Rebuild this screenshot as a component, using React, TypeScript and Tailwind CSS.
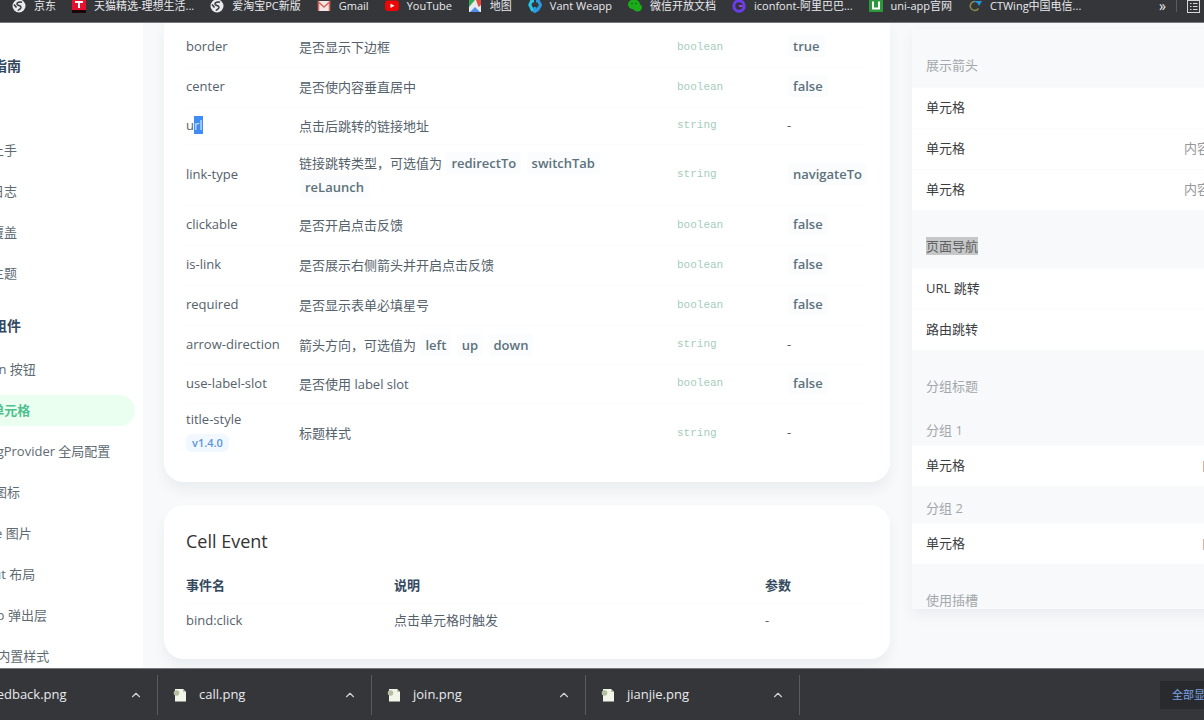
import type { ReactNode } from "react";
import { ChevronUp } from "lucide-react";

const GlobeIcon = () => (
  <svg viewBox="0 0 14 14" className="size-3.5 shrink-0">
    <circle cx="7" cy="7" r="6.5" fill="#e8eaed" />
    <path d="M10 3.2C8 2.6 4.600 3.300 5 5.200c.4 1.600 4.200 1 4 3.200-.2 1.600-2 1.800-3 3.200M2 5.500l2.500 3" fill="none" stroke="#35363a" strokeWidth="1.500" />
  </svg>
);

const bookmarks: { label: string; icon: ReactNode }[] = [
  { label: "京东", icon: <GlobeIcon /> },
  {
    label: "天猫精选-理想生活...",
    icon: (
      <svg viewBox="0 0 14 14" className="size-3.5 shrink-0">
        <rect width="14" height="11" fill="#e8112d" />
        <rect y="11" width="14" height="3" fill="#1a0508" />
        <path d="M3 3h8M7 3v6" stroke="#fff" strokeWidth="2" />
      </svg>
    ),
  },
  { label: "爱淘宝PC新版", icon: <GlobeIcon /> },
  {
    label: "Gmail",
    icon: (
      <svg viewBox="0 0 14 14" className="size-3.5 shrink-0">
        <rect x="1" y="2" width="12" height="10" rx="1" fill="#f3e6e4" />
        <path d="M1.500 12V3L7 8l5.500-5v9" fill="none" stroke="#d9685e" strokeWidth="1.500" />
      </svg>
    ),
  },
  {
    label: "YouTube",
    icon: (
      <svg viewBox="0 0 14 14" className="size-3.5 shrink-0">
        <rect y="1.500" width="14" height="10.500" rx="3" fill="#f00505" />
        <path d="M5.500 4.500v4.500L9.500 6.800z" fill="#fff" />
      </svg>
    ),
  },
  {
    label: "地图",
    icon: (
      <svg viewBox="0 0 14 14" className="size-3.5 shrink-0">
        <rect x="1" y="1" width="12" height="12" fill="#e8eaed" />
        <path d="M1 1h6L1 8z" fill="#34a853" />
        <path d="M2 13l5-5 5 5z" fill="#4f8df0" />
        <path d="M8 1h5v5l-2.500 2z" fill="#e04a3f" />
      </svg>
    ),
  },
  {
    label: "Vant Weapp",
    icon: (
      <svg viewBox="0 0 14 14" className="size-3.5 shrink-0" fill="none" strokeWidth="3">
        <path d="M6 2H3.500L1.800 6l2.500 5H6" stroke="#29c4e8" />
        <path d="M8 2h2.500l2 4-2.500 4.500L7 12.500V8" stroke="#2a9be0" />
      </svg>
    ),
  },
  {
    label: "微信开放文档",
    icon: (
      <svg viewBox="0 0 14 14" className="size-3.5 shrink-0" fill="#1aad19">
        <ellipse cx="6" cy="5.500" rx="6" ry="5" />
        <ellipse cx="9.500" cy="8.500" rx="4.500" ry="4" />
        <circle cx="4" cy="4.500" r="0.800" fill="#0b5e0b" />
        <circle cx="8" cy="4.500" r="0.800" fill="#0b5e0b" />
      </svg>
    ),
  },
  {
    label: "iconfont-阿里巴巴...",
    icon: (
      <svg viewBox="0 0 14 14" className="size-3.5 shrink-0" fill="none">
        <circle cx="7" cy="7" r="5.200" stroke="#6a3df0" strokeWidth="3" />
        <path d="M7 7h3.500" stroke="#a93de8" strokeWidth="2" />
      </svg>
    ),
  },
  {
    label: "uni-app官网",
    icon: (
      <svg viewBox="0 0 14 14" className="size-3.5 shrink-0">
        <rect width="14" height="13" fill="#2b9939" />
        <path d="M4 2.500v7h6v-7" fill="none" stroke="#fff" strokeWidth="2" />
      </svg>
    ),
  },
  {
    label: "CTWing中国电信...",
    icon: (
      <svg viewBox="0 0 14 14" className="size-3.5 shrink-0" fill="none">
        <path d="M7 2.500a4.500 4.500 0 1 0 3.500 7" stroke="#8a8a4a" strokeWidth="1.500" />
        <path d="M5 2h9l-3 5-1.500-3z" fill="#1d9be0" />
      </svg>
    ),
  },
];

const nav = [
  { title: "开发指南", items: ["介绍", "快速上手", "更新日志", "样式覆盖", "定制主题"] },
  {
    title: "基础组件",
    items: [
      "Button 按钮",
      "Cell 单元格",
      "ConfigProvider 全局配置",
      "Icon 图标",
      "Image 图片",
      "Layout 布局",
      "Popup 弹出层",
      "Style 内置样式",
    ],
  },
];

const Code = ({ children }: { children: ReactNode }) => (
  <code className="mx-px rounded bg-[#fafcfe] px-[5px] py-0.5 font-['Open_Sans','Noto_Sans_CJK_SC',sans-serif] text-[13px] font-semibold text-[#5d727b]">
    {children}
  </code>
);

type Prop = { name: ReactNode; desc: ReactNode; type: string; value: string; height?: string };

const props: Prop[] = [
  { name: "border", desc: "是否显示下边框", type: "boolean", value: "true" },
  { name: "center", desc: "是否使内容垂直居中", type: "boolean", value: "false" },
  {
    name: (
      <>
        u<span className="bg-[#3f8cf3] text-[#d5e7ff]">rl</span>
      </>
    ),
    desc: "点击后跳转的链接地址",
    type: "string",
    value: "-",
    height: "h-[37px]",
  },
  {
    name: "link-type",
    desc: (
      <>
        链接跳转类型，可选值为 <Code>redirectTo</Code> <Code>switchTab</Code> <Code>reLaunch</Code>
      </>
    ),
    type: "string",
    value: "navigateTo",
    height: "h-[61px]",
  },
  { name: "clickable", desc: "是否开启点击反馈", type: "boolean", value: "false" },
  { name: "is-link", desc: "是否展示右侧箭头并开启点击反馈", type: "boolean", value: "false" },
  { name: "required", desc: "是否显示表单必填星号", type: "boolean", value: "false" },
  {
    name: "arrow-direction",
    desc: (
      <>
        箭头方向，可选值为 <Code>left</Code> <Code>up</Code> <Code>down</Code>
      </>
    ),
    type: "string",
    value: "-",
    height: "h-[39px]",
  },
  { name: "use-label-slot", desc: "是否使用 label slot", type: "boolean", value: "false", height: "h-[39px]" },
  {
    name: (
      <>
        title-style
        <span className="my-1 block w-fit rounded-md bg-[#f2f8ff] px-1.5 text-[11px] leading-[18px] font-semibold text-[#5a96dc]">
          v1.4.0
        </span>
      </>
    ),
    desc: "标题样式",
    type: "string",
    value: "-",
    height: "h-[59px]",
  },
];

const downloads = ["feedback.png", "call.png", "join.png", "jianjie.png"];

function BookmarkBar() {
  return (
    <header className="h-[23px] shrink-0 overflow-hidden border-b border-[#77787a] bg-[#35363a] text-[11px] text-[#e8eaed]">
      <div className="flex h-3 items-center pl-3">
        <div className="flex flex-1 items-center gap-4">
          {bookmarks.map((b) => (
            <a key={b.label} href="#" className="flex items-center gap-2 whitespace-nowrap">
              {b.icon}
              {b.label}
            </a>
          ))}
        </div>
        <button className="pr-2.5 text-sm" aria-label="更多书签">»</button>
        <div className="h-3 w-px bg-[#5a5b5e]" />
        <svg viewBox="0 0 13 13" className="mr-1 ml-2.5 size-[13px]" fill="none" stroke="#d5d6d8">
          <rect x="0.500" y="0.500" width="12" height="12" />
          <path d="M3 3.500h1.500M3 6.500h1.500M3 9.500h1.500M6 3.500h4.500M6 6.500h4.500M6 9.500h4.500" />
        </svg>
      </div>
    </header>
  );
}

function Sidebar() {
  return (
    <nav className="w-[143px] shrink-0 overflow-hidden bg-white pt-[11px]">
      {/* scrolled sideways, the start of each label is cut off */}
      <div className="mr-2 -ml-[53px] whitespace-nowrap">
        {nav.map((group) => (
          <section key={group.title}>
            <h2 className="h-[55px] pt-5 pl-[18px] text-sm leading-6 font-bold text-[#34495e]">{group.title}</h2>
            <ul>
              {group.items.map((item) => (
                <li key={item} className="py-[5px]">
                  <a
                    href="#"
                    className={
                      item === "Cell 单元格"
                        ? "block rounded-full bg-[#ebfff0] pl-[18px] leading-[31px] font-semibold text-[#4fc08d]"
                        : "block pl-[18px] leading-[31px] text-[#5f6b72]"
                    }
                  >
                    {item}
                  </a>
                </li>
              ))}
            </ul>
          </section>
        ))}
      </div>
    </nav>
  );
}

function Docs() {
  return (
    <main className="flex min-w-0 flex-1 flex-col gap-[23px] pr-[22px] pl-[21px] text-[#55616b]">
      <section className="rounded-b-[20px] bg-white px-[22px] pt-1 pb-5 shadow-[0_8px_12px_#ebedf0]">
        <table className="w-full table-fixed text-left">
          <colgroup>
            <col className="w-[113px]" />
            <col />
            <col className="w-[110px]" />
            <col className="w-[81px]" />
          </colgroup>
          <tbody>
            {props.map((p, i) => (
              <tr key={i} className="border-b border-[#fcfcfd] last:border-b-0">
                <td className={p.height ?? "h-10"}>{p.name}</td>
                <td className="pr-5 leading-6">{p.desc}</td>
                <td className="font-['Liberation_Mono',monospace] text-[11px] text-[#a5cdbd]">{p.type}</td>
                <td>{p.value === "-" ? "-" : <Code>{p.value}</Code>}</td>
              </tr>
            ))}
          </tbody>
        </table>
      </section>

      <section className="rounded-[20px] bg-white px-[22px] pt-[22px] pb-[21px] shadow-[0_8px_12px_#ebedf0]">
        <h3 className="mb-3.5 text-lg leading-7 font-medium text-[#333]">Cell Event</h3>
        <table className="w-full table-fixed text-left">
          <colgroup>
            <col className="w-[208px]" />
            <col />
            <col className="w-[103px]" />
          </colgroup>
          <thead>
            <tr className="h-[34px] text-[#34495e]">
              <th>事件名</th>
              <th>说明</th>
              <th>参数</th>
            </tr>
          </thead>
          <tbody>
            <tr className="h-[35px] border-t border-[#fcfcfd]">
              <td>bind:click</td>
              <td>点击单元格时触发</td>
              <td>-</td>
            </tr>
          </tbody>
        </table>
      </section>
    </main>
  );
}

const Title = ({ children }: { children: ReactNode }) => (
  <h4 className="px-3.5 pt-[27px] pb-[13px] leading-[18px] text-[#a3a8ab] last:pb-0">{children}</h4>
);

const GroupTitle = ({ children }: { children: ReactNode }) => (
  <h5 className="px-3.5 pt-[13px] pb-1.5 leading-[18px] text-[#a3a8ab]">{children}</h5>
);

const Cell = ({ title, value, arrow }: { title: string; value?: string; arrow?: boolean }) => (
  <div className="flex h-[41px] items-center justify-between border-t border-[#fafbfc] bg-white px-3.5 text-[#3c3d3f]">
    {title}
    <span className={arrow ? "pr-[18px] text-[#969799]" : "text-[#969799]"}>{value}</span>
  </div>
);

function Preview() {
  return (
    <aside className="w-[292px] shrink-0 pt-1.5">
      {/* simulator is wider than the visible column */}
      <div className="w-[330px] bg-[#f7f9fa] shadow-[0_6px_12px_#ebedf0]">
        <Title>展示箭头</Title>
        <Cell title="单元格" arrow />
        <Cell title="单元格" value="内容" arrow />
        <Cell title="单元格" value="内容" arrow />
        <Title>
          <span className="bg-[#c6c8c8] text-[#5d6163]">页面导航</span>
        </Title>
        <Cell title="URL 跳转" arrow />
        <Cell title="路由跳转" arrow />
        <Title>分组标题</Title>
        <GroupTitle>分组 1</GroupTitle>
        <Cell title="单元格" value="内容" />
        <GroupTitle>分组 2</GroupTitle>
        <Cell title="单元格" value="内容" />
        <Title>使用插槽</Title>
      </div>
    </aside>
  );
}

function DownloadBar() {
  return (
    <footer className="flex h-[52px] shrink-0 items-center overflow-hidden border-t border-[#77787a] bg-[#35363a] text-[#e8eaed]">
      <div className="-ml-14 flex flex-1">
        {downloads.map((file) => (
          <div
            key={file}
            className="flex h-10 w-[214px] items-center border-r border-[#5a5b5e] pr-3.5 pl-[15px]"
          >
            <svg viewBox="0 0 14 14" className="mr-3 size-3.5 shrink-0">
              <path d="M2 1h8l3 3v9.500H2z" fill="#f1f5e8" />
              <path d="M10 1l3 3h-3z" fill="#b9c0ae" />
              <circle cx="3.500" cy="5" r="2.800" fill="#b4bfa2" />
            </svg>
            <span className="flex-1">{file}</span>
            <button aria-label={`${file} 选项`}>
              <ChevronUp className="size-3.5 text-[#d0d3d7]" />
            </button>
          </div>
        ))}
      </div>
      <div className="w-11 shrink-0">
        <button className="bg-[#292a2d] px-3 py-1.5 text-[11px] leading-4 whitespace-nowrap text-[#7ba4e6]">
          全部显示
        </button>
      </div>
    </footer>
  );
}

export default function App() {
  return (
    <div className="flex h-screen flex-col overflow-hidden bg-[#f7f9fa] font-['Open_Sans','Noto_Sans_CJK_SC',sans-serif] text-[13px]">
      <BookmarkBar />
      <div className="flex min-h-0 flex-1 overflow-hidden">
        <Sidebar />
        <Docs />
        <Preview />
      </div>
      <DownloadBar />
    </div>
  );
}
